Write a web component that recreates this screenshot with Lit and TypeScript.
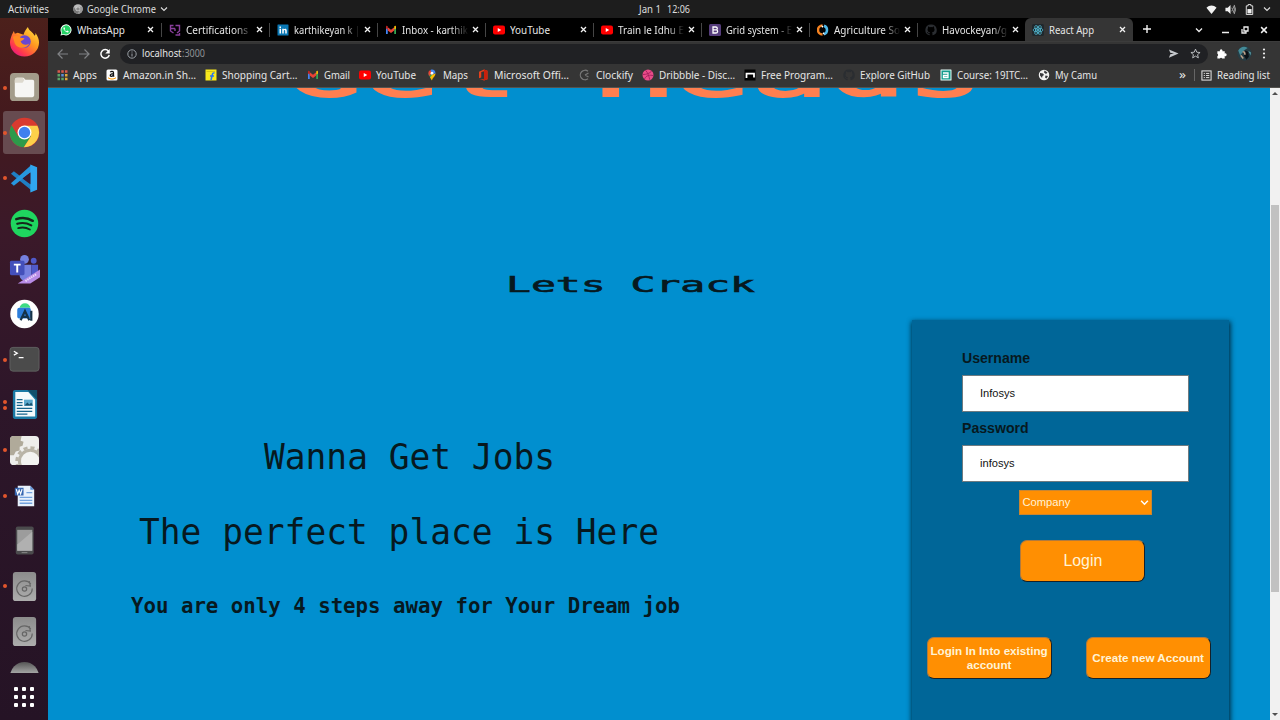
import { LitElement, html, svg, css } from "lit";
import { customElement } from "lit/decorators.js";

// Text set to a given advance width, vertically centred in its box.
const fit = (text: string, w: number, size = 10.2, cls = "", h = 16) => html`<svg
  class="fit ${cls}" width=${w} height=${h}>
  <text x="0" y=${h / 2 + size * 0.36} font-size=${size} textLength=${w} lengthAdjust="spacingAndGlyphs">${text}</text>
</svg>`;

const icon = (body: unknown, size = 12, box = 24) =>
  html`<svg class="ic" width=${size} height=${size} viewBox="0 0 ${box} ${box}">${body}</svg>`;

const octocat = svg`<path fill="#2a2d31" d="M12 1a11 11 0 0 0-3.5 21.500c.6.1.8-.3.8-.6v-2.200c-3 .7-3.700-1.300-3.700-1.300-.5-1.300-1.200-1.600-1.200-1.600-1-.7.1-.7.1-.7 1.100.1 1.700 1.200 1.700 1.200 1 1.700 2.600 1.200 3.200.9.1-.7.4-1.200.7-1.500-2.500-.3-5-1.200-5-5.500 0-1.200.4-2.200 1.100-3-.1-.3-.5-1.400.1-3 0 0 1-.3 3.100 1.200a10 10 0 0 1 5.400 0c2.200-1.500 3.100-1.200 3.100-1.200.6 1.600.2 2.700.1 3 .7.8 1.100 1.800 1.100 3 0 4.300-2.600 5.200-5 5.500.4.4.8 1.100.8 2.200v3c0 .3.2.7.8.6A11 11 0 0 0 12 1z"/>`;
const youtube = svg`<rect x="0" y="3" width="24" height="18" rx="4" fill="#f00"/><path d="M9.500 8v8l7-4z" fill="#fff"/>`;
const gmail = svg`<path d="M2 20V6l3.500 2v12z" fill="#4285f4"/><path d="M18.500 20V8L22 6v14z" fill="#34a853"/><path d="M5.500 13V6.500L12 11.500l6.500-5V13L12 18z" fill="#ea4335"/><path d="M2 9V6c0-3 2-3 3.500-1.500V11z" fill="#c5221f"/><path d="M22 9V6c0-3-2-3-3.500-1.500V11z" fill="#fbbc04"/>`;
const chromeLogo = (gray = false) => {
  const c = gray ? ["#bbb", "#777", "#999", "#ddd", "#888"] : ["#d93a2f", "#2d9a4a", "#fdd04a", "#fff", "#3f80ee"];
  return svg`<circle cx="12" cy="12" r="11.500" fill=${c[0]}/>
    <path d="M2 6.300A11.500 11.500 0 0 0 11.500 23.500L17 15 12 12 7 15z" fill=${c[1]}/>
    <path d="M22 6.700H12L17 15 11.500 23.500A11.500 11.500 0 0 0 22 6.700z" fill=${c[2]}/>
    <circle cx="12" cy="12" r="5.400" fill=${c[3]}/><circle cx="12" cy="12" r="4.400" fill=${c[4]}/>`;
};
const glyphs = {
  whatsapp: svg`<path d="M1 23l1.600-5.700A11 11 0 1 1 7 21.500z" fill="#fff"/><path d="M3 21l1.200-4.200A9.200 9.200 0 1 1 7.600 20z" fill="#25d366"/><path d="M8 6.500c-2 1-1.500 4 1.500 7s6 4.500 7.500 2.500l.3-1.500-2.800-1.500-1.500 1.400c-2-.7-3.200-2-4-3.500l1.100-1.400L9 6.500z" fill="#fff"/>`,
  cert: svg`<path d="M9 3H3v11l6 4M3 9h9M13 3h8v11l-5 4M21 18v4h-8M12 9v5" fill="none" stroke="#8a3f9c" stroke-width="2.800"/>`,
  linkedin: svg`<rect x="1" y="1" width="22" height="22" rx="1" fill="#0a78b5"/><path d="M5 9.500h3V19H5zM5 5h3v3H5zM10.500 9.500h3V11c2-2.500 6-2 6 2.500V19h-3v-5c0-3-3-2.500-3 0v5h-3z" fill="#fff"/>`,
  gmail, youtube, octocat,
  bootstrap: svg`<rect width="24" height="24" rx="3" fill="#563d7c"/><path d="M8 6h5.500c4 0 4 5 1 5.700 4 .7 3.500 6.300-1 6.300H8zm0 5.700h6" fill="none" stroke="#fff" stroke-width="2.600"/>`,
  agri: svg`<path d="M11 3a9 9 0 0 0 0 18" fill="none" stroke="#f58220" stroke-width="5"/><path d="M14 3.500a9 9 0 0 1 0 17" fill="none" stroke="#4db8e8" stroke-width="5"/><path d="M9 2l4 3-3 3zM15 22l-4-3 3-3z" fill="#fff"/>`,
  react: svg`<rect width="24" height="24" rx="3" fill="#20282d"/><g fill="none" stroke="#53bfd9" stroke-width="1.500"><ellipse cx="12" cy="12" rx="10" ry="4"/><ellipse cx="12" cy="12" rx="10" ry="4" transform="rotate(60 12 12)"/><ellipse cx="12" cy="12" rx="10" ry="4" transform="rotate(120 12 12)"/></g><circle cx="12" cy="12" r="2.200" fill="#53bfd9"/>`,
  apps: svg`${[0, 1, 2].map(r => [0, 1, 2].map(c => svg`<rect x=${3 + c * 7.5} y=${2.5 + r * 7.500} width="5" height="5" fill=${["#d9594c", "#d9594c", "#d9594c", "#5aa469", "#5a8fd6", "#e0a83b", "#5aa469", "#5aa469", "#e0a83b"][r * 3 + c]}/>`))}`,
  amazon: svg`<rect x="1" y="1" width="22" height="22" rx="3" fill="#fff"/><path d="M8.500 6.500C10 4 15 4 15 7.500V14l1.500 1M15 9.500c-7-.5-8 5-4.500 5C13 14.500 15 13 15 10" fill="none" stroke="#111" stroke-width="2.500"/><path d="M4 17.500c5 3.500 11 3.500 16 0" fill="none" stroke="#f90" stroke-width="2"/>`,
  flipkart: svg`<path d="M1 1h22v22H1z" fill="#f8e81c"/><path d="M3 5h17" stroke="#d7c414" stroke-width="2"/><path d="M19 8c-4-1-4 2-5 6l-2 8M10 14h8" fill="none" stroke="#2874f0" stroke-width="3"/>`,
  maps: svg`<path d="M12 23c-1-6-7-8-7-14.500L12 9z" fill="#34a853"/><path d="M12 23c1-6 7-8 7-14.500L12 12l-4 5z" fill="#fbbc04"/><path d="M5 10a7 7 0 0 1 4-8l3 7-6 5z" fill="#ea4335"/><path d="M9 2c5-2.500 10 1 10 7l-7 0z" fill="#4285f4"/><circle cx="12" cy="8.500" r="2.800" fill="#fff"/>`,
  office: svg`<path d="M14 1l7 2.500v17L14 23l-9-3 9 1V4.500L8.500 6v11L4 18.500v-13z" fill="#e8401c"/><path d="M14 1l7 2.500v17L14 23z" fill="#c8200d"/>`,
  clockify: svg`<path d="M18 4.500A9.500 9.500 0 1 0 18 19.500M12 12l7-4M12 12l7 4" fill="none" stroke="#777" stroke-width="2.500"/>`,
  dribbble: svg`<circle cx="12" cy="12" r="11" fill="#ea4c89"/><path d="M7 2.500c5 5 7 12 8.500 19M1.500 11C9 11 15 9 19.500 4M5 20C8 13 15 11 23 13.500" fill="none" stroke="#a41d5c" stroke-width="1.800"/>`,
  free: svg`<rect x="1" y="1" width="22" height="22" fill="#000"/><path d="M5 18V9h15v8" fill="none" stroke="#fff" stroke-width="3.500"/>`,
  course: svg`<rect x="1" y="1" width="22" height="22" rx="1" fill="#e8fffb"/><rect x="3" y="3" width="18" height="18" fill="#159c8c"/><path d="M6 8h10v9H7v-4h9" fill="none" stroke="#fff" stroke-width="2.600"/>`,
  globe: svg`<circle cx="12" cy="12" r="10.500" fill="#f1f1f1"/><path d="M4 8l6 1 2 3-3 2-1 4-4-5zM13 3l6 4-3 3-4-3zM15 13l5 1-3 5-3-2z" fill="#35363a"/>`,
};
type Glyph = keyof typeof glyphs;

const tabs: [Glyph, string, number][] = [
  ["whatsapp", "WhatsApp", 48], ["cert", "Certifications", 62], ["linkedin", "karthikeyan k |", 66],
  ["gmail", "Inbox - karthik", 66], ["youtube", "YouTube", 40], ["youtube", "Train le Idhu E", 66],
  ["bootstrap", "Grid system - E", 66], ["agri", "Agriculture So", 66], ["octocat", "Havockeyan/g", 65],
  ["react", "React App", 45],
];
// glyph, label, label width, slot width
const bookmarks: [Glyph, string, number, number][] = [
  ["apps", "Apps", 24, 50], ["amazon", "Amazon.in Sh…", 73, 99], ["flipkart", "Shopping Cart…", 75.500, 101.500],
  ["gmail", "Gmail", 26, 52.500], ["youtube", "YouTube", 40, 67], ["maps", "Maps", 25, 51],
  ["office", "Microsoft Offi…", 75, 101.500], ["clockify", "Clockify", 37, 63], ["dribbble", "Dribbble - Disc…", 76, 102.500],
  ["free", "Free Program…", 72, 99], ["octocat", "Explore GitHub", 70, 96.500], ["course", "Course: 19ITC…", 71, 98],
  ["globe", "My Camu", 42, 60],
];

const disk = svg`<defs><linearGradient id="dk" x2="0" y2="1"><stop stop-color="#8c8c8c"/><stop offset="1" stop-color="#adadad"/></linearGradient></defs><rect x="4" y="1" width="24" height="30" rx="3" fill="url(#dk)"/><path d="M22.500 13.500A8 8 0 1 0 24 18M21 10.500l1 5-5-.5" fill="none" stroke="#666" stroke-width="1.200"/><circle cx="16" cy="18.500" r="2.200" fill="none" stroke="#666" stroke-width="1.300"/>`;

const dock: { dots: number; on?: boolean; art: unknown }[] = [
  { dots: 0, art: svg`<defs><linearGradient id="ff" x1="1" x2=".2" y2="1"><stop stop-color="#fff04a"/><stop offset=".45" stop-color="#ff9a1f"/><stop offset=".8" stop-color="#ff3a4c"/><stop offset="1" stop-color="#e31587"/></linearGradient></defs><path d="M3 8l2-4 1 3 3-1 3 1 3 1c1-4 3-6 4.500-8 1 4 5 5 7 9 1-1 1-2 .7-3C30 10 31 13 31 16a15 14.500 0 0 1-30 0c0-3 1-5 2-8z" fill="url(#ff)"/><circle cx="16" cy="15" r="6.500" fill="#6a47d2"/><path d="M4 10c4-2 6-1 8 1l4 .5c-1 2-3 2-4 3.500 2 4 6 4 9 2-3 6-12 6-15 0z" fill="#ff8b22"/>` },
  { dots: 1, art: svg`<rect x="1" y="1" width="30" height="29" rx="4" fill="#a39c8b"/><path d="M6 9c0-2 1-3 2-3h7l2 2h7c1.500 0 2 1 2 2v14c0 1-1 2-2 2H8c-1 0-2-1-2-2z" fill="#f6f6f4"/><path d="M6 11V8c0-1 1-2 2-2h6l2 2-2 3z" fill="#ddd9ce"/>` },
  { dots: 1, on: true, art: svg`<g transform="scale(1.333)">${chromeLogo()}</g>` },
  { dots: 1, art: svg`<path d="M2 11l3-2.500L24 23v6z" fill="#1f7fc4"/><path d="M2 21l3 2.500L23 9V2z" fill="#2796df"/><path d="M22 1.500l7 3v23l-7 3V1.500z" fill="#30a6ef"/><path d="M22 10v12l-8-6z" fill="#3a1830"/>` },
  { dots: 0, art: svg`<circle cx="16" cy="16" r="14.200" fill="#1fd65f"/><g fill="none" stroke="#16261b" stroke-linecap="round"><path d="M7.500 11.500c6-1.800 12-1.200 17 1.700" stroke-width="2.600"/><path d="M8.500 16.300c5-1.500 10-.8 14.500 1.600" stroke-width="2.200"/><path d="M9.500 20.800c4-1.100 8.500-.6 12 1.400" stroke-width="1.900"/></g>` },
  { dots: 0, art: svg`<g transform="translate(0 2)"><circle cx="16" cy="4.500" r="4.500" fill="#7580df"/><circle cx="25.500" cy="6" r="3" fill="#5059c9"/><path d="M11 10h12v14c-4 5-12 3-12-3z" fill="#7580df"/><path d="M23 10h7v10c-1 4-7 4-7 1z" fill="#5059c9"/><rect x="1" y="6" width="15" height="15" rx="1.500" fill="#4450bb"/><path d="M5 10h7M8.500 10v8" stroke="#fff" stroke-width="2"/><path d="M9 29.500L32 15v8l-10 6.500z" fill="#b88ce6"/><path d="M17 27l11-7" stroke="#e9d9fa" stroke-width="2" stroke-dasharray="1.500 .8"/></g>` },
  { dots: 0, art: svg`<circle cx="16" cy="15.500" r="14.700" fill="#fff"/><path d="M11 9a5.500 4.500 0 0 1 11 0z" fill="#3ddc84"/><rect x="8.500" y="9" width="14" height="11" rx="2" fill="#2c7ddb"/><path d="M12 22l4.500-9.500L21 22M13.500 18.500h6M23 12v10.500" fill="none" stroke="#153248" stroke-width="2.300"/>` },
  { dots: 1, art: svg`<rect x="1" y="3.500" width="30" height="24.500" rx="3" fill="#4b4b4b" stroke="#5f5f5f"/><path d="M5 7.500l3.500 2-3.500 2M10 14h5" fill="none" stroke="#fff" stroke-width="1.300"/>` },
  { dots: 2, art: svg`<path d="M6 1h15l8 9v19c0 1-1 2-2 2H6c-1 0-2-1-2-2V3c0-1 1-2 2-2z" fill="#1b7aa5"/><path d="M6.500 3H20l7 8v17.500H6.500z" fill="#f5fafc"/><path d="M19 1h10v10z" fill="#12506d"/><path d="M8 11h6M8 14h6M8 17h6M8 20h16M8 23h16M8 26h11" stroke="#17658c" stroke-width="1.300"/><rect x="15.500" y="11" width="9" height="6.500" fill="#5ba8cc"/><path d="M16 17l3-3 2 2 2-2 1.500 3z" fill="#174f6b"/>` },
  { dots: 1, art: svg`<defs><clipPath id="gr"><rect x="1" y="1" width="30" height="30" rx="4"/></clipPath></defs><g clip-path="url(#gr)"><rect x="1" y="1" width="30" height="30" fill="#eeeeec"/><path d="M1 1h12l-1 5 3 1-1 4-3 1 0 4-4 1-2 4-4 0z" fill="#b0aa9a"/><circle cx="22" cy="27" r="14" fill="none" stroke="#b9b4a7" stroke-width="3" stroke-dasharray="4.200 3.100"/><circle cx="22" cy="27" r="11.200" fill="#f3f3f1" stroke="#b9b4a7" stroke-width="3.200"/></g>` },
  { dots: 1, art: svg`<path d="M9 6h13l4 4v17H9z" fill="#e8f1fc"/><path d="M22 6l4 4h-4z" fill="#5b8fd4"/><path d="M11 18h13M11 21h13M11 24h13M18 13h6" stroke="#74a3de" stroke-width="1.300"/><rect x="6" y="8" width="9" height="8" fill="#3767b1"/><path d="M7.500 9.500l1.500 5 1.500-4 1.500 4 1.500-5" fill="none" stroke="#fff" stroke-width="1.200"/>` },
  { dots: 0, art: svg`<rect x="7" y="1.500" width="18.500" height="29" rx="2" fill="#4b4b4d"/><rect x="8.500" y="5" width="15.500" height="21.500" fill="#9c9c9c"/><path d="M8.500 20L24 7v19.500H8.500z" fill="#b0b0b0"/><path d="M13 28.500h6" stroke="#888"/>` },
  { dots: 1, art: disk },
  { dots: 0, art: disk },
  { dots: 0, art: svg`<defs><linearGradient id="dm" x2="0" y2=".4"><stop stop-color="#555"/><stop offset="1" stop-color="#a8a8a8"/></linearGradient></defs><circle cx="16" cy="16" r="15" fill="url(#dm)"/>` },
];

@customElement("app-root")
export class AppRoot extends LitElement {
  static styles = css`
    :host { display: flex; flex-direction: column; width: 1280px; height: 720px; overflow: hidden; background: #1d1d1d; color: #e6e6e6; font-family: "Noto Sans", "Open Sans", sans-serif; }
    * { box-sizing: border-box; }
    svg { display: block; flex: none; }
    .fit { overflow: visible; fill: currentColor; }
    .top { height: 18px; flex: none; display: flex; align-items: center; color: #dedede; padding: 0 9px 0 8px; }
    .top-left { display: flex; align-items: center; width: 631px; }
    .top-left .ic { margin: 0 4px 0 24px; }
    .top-left .chev { margin-left: 4px; }
    .clock { display: flex; gap: 6px; }
    .top-right { display: flex; align-items: center; margin-left: auto; gap: 8px; }
    .top-right .chev { margin-right: 0; }
    .shell { flex: 1; display: flex; min-height: 0; }
    .dock { width: 48px; flex: none; display: flex; flex-direction: column; background: linear-gradient(#4c201b, #43191e 15%, #3b1929 30%, #2d1629 55%, #251325); }
    .apps { height: 655px; padding-top: 1.500px; overflow: hidden; }
    .app { height: 45.350px; display: flex; align-items: center; }
    .slot { width: 42px; height: 43px; margin-left: -6px; border-radius: 3px; display: grid; place-items: center; }
    .slot.on { background: #674b50; }
    .dots { width: 9px; flex: none; display: flex; flex-direction: column; align-items: center; gap: 2px; z-index: 1; }
    .dot { width: 4px; height: 4px; border-radius: 50%; background: #e2552c; }
    .grid { display: grid; grid-template-columns: repeat(3, 4px); gap: 4px; margin: 14px 0 0 14px; }
    .cell { height: 4px; border-radius: 1px; background: #fff; }
    .browser { flex: 1; min-width: 0; display: flex; flex-direction: column; }
    .tabs { height: 23px; flex: none; background: #000; display: flex; padding-left: 5px; align-items: stretch; }
    .tab { width: 108px; flex: none; display: flex; align-items: center; padding: 0 0 1px 7px; }
    .tab + .tab { border-left: 1px solid #454545; }
    .tab.active { background: #353535; border: 0; border-radius: 6px 6px 0 0; padding-bottom: 0; }
    .tab:not(.active) { height: 14px; margin-top: 5px; }
    .label { width: 68px; margin-left: 5px; overflow: hidden; }
    .label.fade { -webkit-mask-image: linear-gradient(90deg, #000 72%, transparent 98%); mask-image: linear-gradient(90deg, #000 72%, transparent 98%); }
    .tab .close { margin-left: 1.500px; }
    .plus { margin: 6px 0 0 9px; }
    .window { display: flex; align-items: center; gap: 11px; margin-left: 43px; }
    .minimise { margin-left: 7px; }
    .tools { height: 24px; flex: none; display: flex; align-items: center; background: #353535; padding-left: 9px; border-top: 1px solid #3c3c3c; }
    .tools > .ic { margin-right: 9px; }
    .omni { height: 20px; width: 1088px; border-radius: 10px; background: #202124; display: flex; align-items: center; padding: 0 7px; }
    .omni .info { margin-right: 5px; }
    .omni .fit { margin-top: -1px; }
    .dim { color: #8f9195; }
    .send { margin-left: auto; display: flex; gap: 11px; }
    .ext { display: flex; align-items: center; gap: 10px; margin-left: 8px; }
    .marks { height: 23px; flex: none; background: #353535; border-bottom: 1px solid #55534f; display: flex; align-items: center; padding: 0 10px 2px 8px; }
    .mark { display: flex; align-items: center; gap: 5px; flex: none; }
    .more { margin-left: auto; display: flex; align-items: center; gap: 5px; }
    .rule { width: 1px; height: 12px; background: #666; margin: 0 1px 0 3px; }
    .view { flex: 1; min-height: 0; display: flex; }
    .page { flex: 1; min-width: 0; background: #018fcf; overflow: hidden; color: #07191f; font-family: "DejaVu Sans Mono", "Liberation Mono", monospace; }
    .headline { height: 10px; display: flex; align-items: flex-end; padding-left: 237px; color: #ff7f50; }
    .headline .fit { stroke: currentColor; stroke-width: 2px; margin-bottom: -17px; }
    .crack { height: 222px; padding: 164px 0 0 458px; }
    .crack .fit { stroke: currentColor; stroke-width: .6px; }
    .row { display: flex; height: 400px; align-items: flex-start; }
    .pitch { width: 864px; flex: none; padding-top: 106px; }
    .pitch .a { margin-left: 216px; }
    .pitch .b { margin: 15px 0 0 91px; }
    .pitch .c { margin: 13.500px 0 0 83px; font-weight: bold; }
    .card { width: 317px; height: 440px; flex: none; background: #006698; box-shadow: 0 2px 5px 1.500px rgba(0, 18, 28, .8); font-family: "Liberation Sans", Arial, sans-serif; padding: 28px 0 0; }
    .field { margin-left: 50px; width: 227px; font-size: 14.100px; line-height: 20px; font-weight: bold; height: 70px; }
    .box { height: 37px; margin-top: 7px; background: #fff; border: 1px solid #6f7b80; font: 11.100px/34px "Liberation Sans", Arial, sans-serif; padding-left: 17px; color: #111; }
    .select { margin: 2px 0 0 107px; width: 133px; height: 25px; background: #ff8f02; border: 1px solid #c98632; color: #fff3d6; font-size: 11.200px; padding: 0 2px 1px 2.500px; display: flex; align-items: center; justify-content: space-between; }
    .btn { width: 125px; height: 42px; background: #ff8f02; border: 1.500px solid; border-color: #b07a3e #14202a #14202a #b07a3e; border-radius: 7px; color: #fff3d6; display: flex; align-items: center; justify-content: center; text-align: center; font-size: 11.660px; line-height: 14px; font-weight: bold; white-space: nowrap; }
    .btn.main { margin: 25px 0 0 108.400px; font-size: 15.900px; font-weight: normal; }
    .pair { display: flex; gap: 34px; margin: 55px 0 0 14.600px; }
    .scroll { width: 10px; flex: none; background: #f1f1f1; display: flex; flex-direction: column; align-items: center; padding: 3px 0; justify-content: space-between; }
    .thumb { width: 8px; height: 387px; background: #c1c1c1; margin-top: -11px; }
  `;

  render() {
    const chev = (s = 8) => html`<svg class="chev" width=${s} height=${s} viewBox="0 0 8 8"><path d="M1 2.500l3 3 3-3" fill="none" stroke="currentColor" stroke-width="1.100"/></svg>`;
    const cross = (s = 7) => html`<svg class="close" width=${s} height=${s} viewBox="0 0 7 7"><path d="M1 1l5 5M6 1L1 6" stroke="#f2f2f2" stroke-width="1.300"/></svg>`;
    return html`
      <div class="top">
        <div class="top-left">${fit("Activities", 41)}${icon(chromeLogo(true), 10)}${fit("Google Chrome", 69)}${chev()}</div>
        <div class="clock">${fit("Jan 1", 22)}${fit("12:06", 23)}</div>
        <div class="top-right">
          ${icon(svg`<path d="M12 22L1 8C8 2 16 2 23 8z" fill="#f2f2f2"/>`, 11)}
          ${icon(svg`<path d="M1 8h5l6-6v20l-6-6H1z" fill="#f2f2f2"/><path d="M15 8q3 4 0 8M18 5q5 7 0 14M20 2q6 10 0 20" fill="none" stroke="#c8c8c8" stroke-width="1.800"/>`, 11)}
          ${icon(svg`<path d="M5 4h4V1h6v3h4v19H5z" fill="none" stroke="#eee" stroke-width="2"/><path d="M7.500 11h9v9.500h-9z" fill="#eee"/>`, 11)}
          ${chev()}
        </div>
      </div>
      <div class="shell">
        <div class="dock">
          <div class="apps">
            ${dock.map(d => html`<div class="app">
              <div class="dots">${Array.from({ length: d.dots }, () => html`<i class="dot"></i>`)}</div>
              <div class="slot ${d.on ? "on" : ""}">${icon(d.art, 31, 32)}</div>
            </div>`)}
          </div>
          <div class="grid">${Array.from({ length: 9 }, () => html`<i class="cell"></i>`)}</div>
        </div>
        <div class="browser">
          <div class="tabs">
            ${tabs.map(([g, label, w], i) => html`<div class="tab ${i === 9 ? "active" : ""}">
              ${icon(glyphs[g])}<div class="label ${w > 55 ? "fade" : ""}">${fit(label, w)}</div>${cross()}
            </div>`)}
            <svg class="plus" width="10" height="10" viewBox="0 0 10 10"><path d="M5 1v8M1 5h8" stroke="#f4f4f4" stroke-width="1.400"/></svg>
            <div class="window">
              <svg width="8" height="8" viewBox="0 0 8 8"><path d="M1 2.500l3 3 3-3" fill="none" stroke="#eee" stroke-width="1.300"/></svg>
              <svg class="minimise" width="9" height="8" viewBox="0 0 9 8"><path d="M1 6.500h7" stroke="#eee" stroke-width="1.500"/></svg>
              <svg width="8" height="8" viewBox="0 0 8 8"><path d="M3 1h4v4H3zM1 3v4h4V5" fill="none" stroke="#eee" stroke-width="1.300"/></svg>
              ${cross(8)}
            </div>
          </div>
          <div class="tools">
            ${icon(svg`<path d="M22 12H3M11 3l-9 9 9 9" fill="none" stroke="#808285" stroke-width="2.400"/>`)}
            ${icon(svg`<path d="M2 12h19M13 3l9 9-9 9" fill="none" stroke="#808285" stroke-width="2.400"/>`)}
            ${icon(svg`<path d="M19 6.500A8.500 8.500 0 1 0 20.500 14" fill="none" stroke="#fff" stroke-width="3"/><path d="M21.500 2v9h-9z" fill="#fff"/>`)}
            <div class="omni">
              <svg class="info" width="10" height="10" viewBox="0 0 10 10"><circle cx="5" cy="5" r="4.200" fill="none" stroke="#9aa0a6"/><path d="M5 4.500v3M5 2.500v1" stroke="#9aa0a6"/></svg>
              ${fit("localhost", 39.500)}${fit(":3000", 23, 10.2, "dim")}
              <div class="send">
                ${icon(svg`<path d="M2 3l21 9-21 9 3-7.500 8-1.500-8-1.500z" fill="#c4c7cb"/>`, 11)}
                ${icon(svg`<path d="M12 2.500l2.800 6.700 7.200.6-5.500 4.700 1.700 7-6.200-3.800-6.200 3.800 1.700-7L2 9.800l7.200-.6z" fill="none" stroke="#c4c7cb" stroke-width="2"/>`, 11)}
              </div>
            </div>
            <div class="ext">
              ${icon(svg`<path d="M3 7h5.500a3 3 0 1 1 5.500 0H19v5a3 3 0 1 1 0 5.500V23h-5.500a2.800 2.800 0 0 0-5 0H3v-5.500a2.700 2.700 0 0 0 0-5z" fill="#fff"/>`, 11)}
              ${icon(svg`<circle cx="12" cy="12" r="11.500" fill="#263d45"/><path d="M2 7Q8-2 17 3l-6 4-6 8z" fill="#438996"/><path d="M13 7l5 2 1 8-4 5-4-7z" fill="#0b1218"/><path d="M9 9l3 1 1 4M6 15l4 5" stroke="#bda48d" stroke-width="2.500"/><path d="M18 8l4 2v5z" fill="#5ba2ac"/>`, 15)}
              <svg width="4" height="11" viewBox="0 0 4 11"><circle cx="2" cy="1.500" r="1.100" fill="#eee"/><circle cx="2" cy="5.500" r="1.100" fill="#eee"/><circle cx="2" cy="9.500" r="1.100" fill="#eee"/></svg>
            </div>
          </div>
          <div class="marks">
            ${bookmarks.map(([g, label, w, slot]) => html`<div class="mark" style="width:${slot}px">${icon(glyphs[g])}${fit(label, w)}</div>`)}
            <div class="more">
              ${fit("»", 7, 12)}<i class="rule"></i>
              ${icon(svg`<rect x="2" y="2" width="20" height="20" fill="none" stroke="#e6e6e6" stroke-width="2.200"/><path d="M6 7.500h2.500M11 7.500h7M6 12h2.500M11 12h7M6 16.500h2.500M11 16.500h7" stroke="#e6e6e6" stroke-width="2"/>`, 11)}
              ${fit("Reading list", 53)}
            </div>
          </div>
          <div class="view">
            <div class="page">
              <div class="headline">${fit("Get Heads", 699, 68, "", 86)}</div>
              <div class="crack">${fit("Lets Crack", 249, 21, "", 44)}</div>
              <div class="row">
                <div class="pitch">
                  <div class="a">${fit("Wanna Get Jobs", 291, 35.700, "", 60)}</div>
                  <div class="b">${fit("The perfect place is Here", 520, 35.700, "", 60)}</div>
                  <div class="c">${fit("You are only 4 steps away for Your Dream job", 549, 21.500, "", 60)}</div>
                </div>
                <div class="card">
                  <div class="field">Username<div class="box">Infosys</div></div>
                  <div class="field">Password<div class="box">infosys</div></div>
                  <div class="select">Company<svg width="9" height="9" viewBox="0 0 8 8"><path d="M1 2.500l3 3 3-3" fill="none" stroke="#fff" stroke-width="1.300"/></svg></div>
                  <div class="btn main">Login</div>
                  <div class="pair"><div class="btn">Login In Into existing<br />account</div><div class="btn">Create new Account</div></div>
                </div>
              </div>
            </div>
            <div class="scroll">
              <svg width="6" height="5" viewBox="0 0 6 5"><path d="M0 4l3-3 3 3z" fill="#505050"/></svg>
              <i class="thumb"></i>
              <svg width="6" height="5" viewBox="0 0 6 5"><path d="M0 1l3 3 3-3z" fill="#505050"/></svg>
            </div>
          </div>
        </div>
      </div>`;
  }
}
